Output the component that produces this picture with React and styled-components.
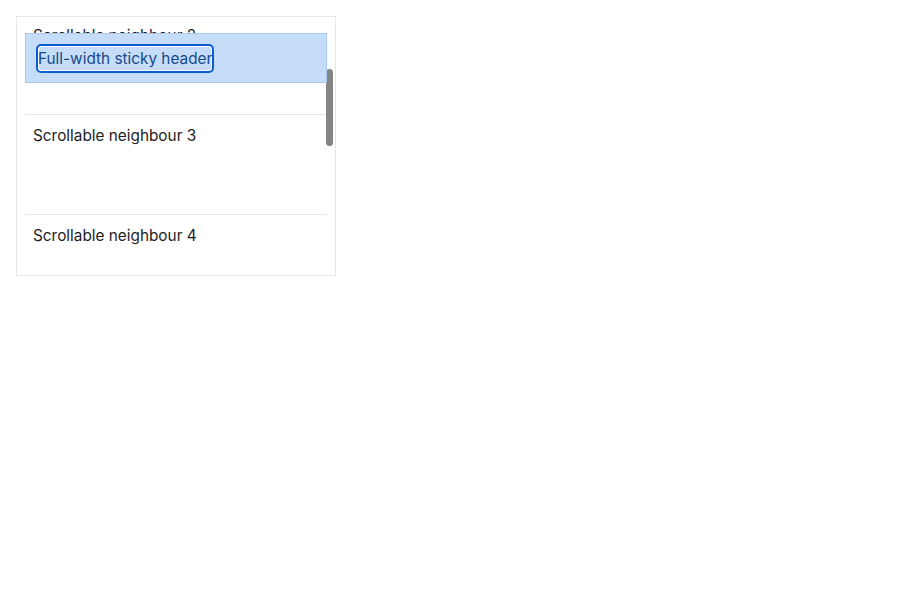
import React, { useEffect, useRef, useState } from 'react';
import styled, { createGlobalStyle } from 'styled-components';

const Global = createGlobalStyle`
  body {
    margin: 0;
    background: #fff;
    font-family: Inter, "Liberation Sans", Arial, sans-serif;
    color: #1d1d1f;
  }
`;

const Page = styled.div`
  padding: 16px;
`;

const Frame = styled.div`
  position: relative;
  width: 320px;
  height: 260px;
  box-sizing: border-box;
  border: 1px solid #e6e6e6;
`;

const Scroller = styled.div`
  height: 100%;
  overflow-y: auto;
  padding: 8px;
  box-sizing: border-box;
  scrollbar-width: none;
  &::-webkit-scrollbar {
    display: none;
  }
`;

const StickyHeader = styled.div`
  position: sticky;
  top: 8px;
  z-index: 1;
  height: 50px;
  box-sizing: border-box;
  display: flex;
  align-items: center;
  padding: 0 12px;
  background: #c5ddf9;
  border: 1px solid #a9c8ee;
`;

const HeaderButton = styled.button`
  font: inherit;
  font-size: 15.35px;
  line-height: 21px;
  color: #17498a;
  background: none;
  border: none;
  padding: 2px 0;
  border-radius: 3px;
  outline: ${p => (p.$focused ? '2px solid #0b5cd0' : 'none')};
  box-shadow: ${p => (p.$focused ? 'inset 0 0 0 1px #fff' : 'none')};
  cursor: pointer;
`;

const Row = styled.div`
  height: 100px;
  box-sizing: border-box;
  padding: 9px 8px 7px;
  border-top: 1px solid #e6e6e6;
  font-size: 15.35px;
  line-height: 24px;
`;

const Thumb = styled.div`
  position: absolute;
  right: 2px;
  width: 7px;
  border-radius: 4px;
  background: #858585;
  pointer-events: none;
`;

const rows = [1, 2, 3, 4, 5, 6, 7, 8];

const App = () => {
  const ref = useRef(null);
  const [thumb, setThumb] = useState({ top: 52, height: 76 });

  const measure = () => {
    const el = ref.current;
    if (!el) return;
    const track = el.clientHeight;
    const h = Math.max(24, (track * track) / el.scrollHeight);
    const max = el.scrollHeight - track;
    const top = max > 0 ? (el.scrollTop / max) * (track - h - 6) + 6 : 6;
    setThumb({ top, height: h });
  };

  useEffect(() => {
    ref.current.scrollTop = 161;
    measure();
  }, []);

  return (
    <>
      <Global />
      <Page>
        <Frame>
          <Scroller ref={ref} onScroll={measure}>
            <StickyHeader>
              <HeaderButton $focused>Full-width sticky header</HeaderButton>
            </StickyHeader>
            {rows.map(n => (
              <Row key={n}>Scrollable neighbour {n}</Row>
            ))}
          </Scroller>
          <Thumb style={{ top: thumb.top, height: thumb.height }} />
        </Frame>
      </Page>
    </>
  );
};

export default App;
